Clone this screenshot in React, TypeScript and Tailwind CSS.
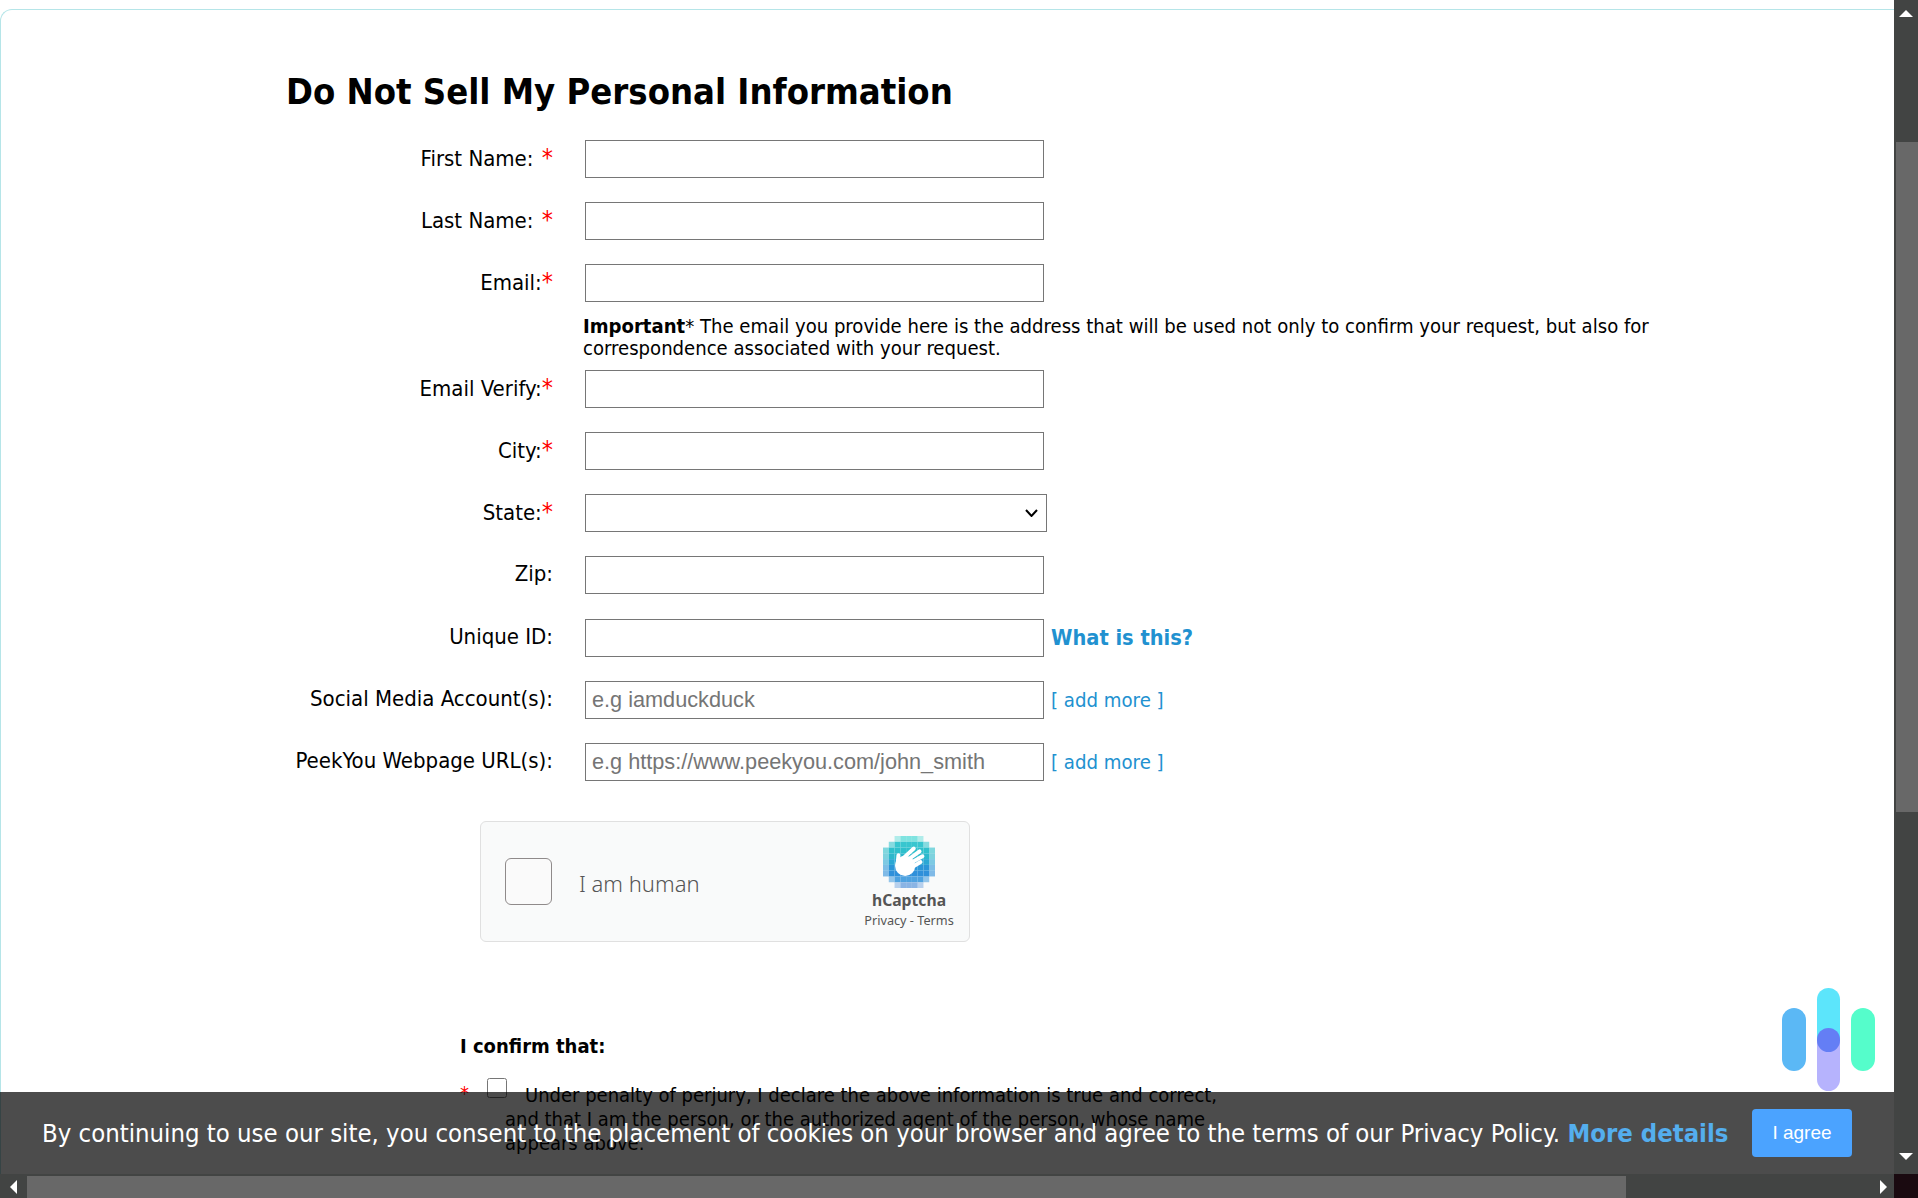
const font = "font-['DejaVu_Sans_Condensed','DejaVu_Sans',sans-serif]"

const fields = [
  { label: 'First Name:', required: true, spaced: true },
  { label: 'Last Name:', required: true, spaced: true },
  { label: 'Email:', required: true, note: true },
  { label: 'Email Verify:', required: true },
  { label: 'City:', required: true },
  { label: 'State:', required: true, select: true },
  { label: 'Zip:', tall: true },
  { label: 'Unique ID:', what: true },
  { label: 'Social Media Account(s):', placeholder: 'e.g iamduckduck', more: true },
  { label: 'PeekYou Webpage URL(s):', placeholder: 'e.g https://www.peekyou.com/john_smith', more: true },
]

const logoRows = [
  { from: 2, to: 6, color: '#7fe3e0' },
  { from: 1, to: 7, color: '#38c6cf' },
  { from: 0, to: 8, color: '#2fc0cc' },
  { from: 0, to: 8, color: '#2cb8cc' },
  { from: 0, to: 8, color: '#2aa8d4' },
  { from: 0, to: 8, color: '#2a96d8' },
  { from: 0, to: 8, color: '#2f90da' },
  { from: 1, to: 7, color: '#4ea2e0' },
  { from: 2, to: 6, color: '#8ab4e4' },
]

function CaptchaLogo() {
  return (
    <svg width="52" height="52" viewBox="0 0 54 54">
      {logoRows.map((row, y) =>
        Array.from({ length: row.to - row.from + 1 }, (_, i) => {
          const x = row.from + i
          const edge = x === row.from || x === row.to
          return (
            <rect
              key={`${x}-${y}`}
              x={x * 6}
              y={y * 6}
              width="6"
              height="6"
              fill={row.color}
              opacity={edge ? 0.6 : 1}
            />
          )
        }),
      )}
      <g stroke="#fff" strokeWidth="4" strokeLinecap="round" fill="none">
        <path d="M20 24 L32 13" />
        <path d="M24 26 L38 16" />
        <path d="M27 29 L41 21" />
        <path d="M29 33 L39 27" />
        <path d="M15 30 L16 20" />
      </g>
      <ellipse cx="23" cy="31" rx="10.5" ry="10.5" fill="#fff" />
    </svg>
  )
}

function FormRow({ field }: { field: (typeof fields)[number] }) {
  return (
    <>
      <div className="flex h-[38px] items-start">
        <label className="w-[552px] pt-[5px] text-right text-[22px] leading-[26px] whitespace-pre text-black">
          {field.label}
          {field.spaced && ' '}
          {field.required && (
            <span className={field.spaced ? 'ml-[2px] text-[25px] leading-none text-[#f00]' : 'text-[25px] leading-none text-[#f00]'}>*</span>
          )}
        </label>
        <div className="ml-[32px] flex items-center">
          {field.select ? (
            <div className="relative">
              <select className="block h-[38px] w-[462px] appearance-none rounded-none border border-[#767676] bg-white" />
              <svg
                className="pointer-events-none absolute top-[15px] right-[9px]"
                width="13"
                height="8"
                viewBox="0 0 13 8"
              >
                <path d="M1 1 L6.5 7 L12 1" fill="none" stroke="#000" strokeWidth="2" />
              </svg>
            </div>
          ) : (
            <input
              type="text"
              placeholder={field.placeholder}
              className="h-[38px] w-[459px] border border-[#767676] bg-white px-[6px] font-['Liberation_Sans',sans-serif] text-[21.7px] outline-none placeholder:text-[#757575]"
            />
          )}
          {field.what && (
            <a className="ml-[7px] text-[21.6px] font-bold text-[#2191d0]">What is this?</a>
          )}
          {field.more && (
            <a className="mt-[1px] ml-[7px] text-[20.2px] whitespace-pre text-[#2191d0]">[ add more ]</a>
          )}
        </div>
      </div>
      {field.note ? (
        <p className="mt-[13px] mb-[11px] ml-[582px] w-[1100px] text-[20.1px] leading-[22px] text-black">
          <b>Important</b>* The email you provide here is the address that will be used not only to confirm your request, but also for correspondence associated with your request.
        </p>
      ) : (
        <div className={field.tall ? 'h-[25px]' : 'h-[24px]'} />
      )}
    </>
  )
}

function Captcha() {
  return (
    <div className="mt-[16px] ml-[479px] flex h-[121px] w-[490px] items-center rounded-[6px] border border-[#e0e0e0] bg-[#f9fafa] pr-[16px] pl-[24px] font-['Noto_Sans',sans-serif]">
      <div className="h-[47px] w-[47px] rounded-[6px] border border-[#8f8a8a] bg-[#fafafa]" />
      <span className="mt-[4px] ml-[27px] flex-1 text-[22px] font-light text-[#555]">I am human</span>
      <div className="mt-[1px] flex w-[88px] flex-col items-center">
        <CaptchaLogo />
        <span className="text-[15.7px] leading-[24px] font-bold text-[#555]">hCaptcha</span>
        <span className="text-[12.7px] leading-[16px] whitespace-nowrap text-[#555]">Privacy - Terms</span>
      </div>
    </div>
  )
}

function Confirm() {
  return (
    <div className="mt-[93px] ml-[459px] w-[780px] text-[20px] text-black">
      <p className="leading-[22px] font-bold">I confirm that:</p>
      <div className="relative mt-[21px] pl-[45px] leading-[24px]">
        <span className="absolute top-[3px] left-0 text-[#f00]">*</span>
        <input type="checkbox" className="absolute top-0 left-[27px] h-[20px] w-[20px]" />
        <p className="pt-[5px] indent-[20px]">
          Under penalty of perjury, I declare the above information is true and correct, and that I am the person, or the authorized agent of the person, whose name appears above.
        </p>
      </div>
    </div>
  )
}

function SecurityMark() {
  return (
    <div className="absolute top-[988px] left-[1782px] flex h-[103px] gap-[11px]">
      <div className="mt-[20px] h-[63px] w-[24px] rounded-full bg-[#5bb8f5]" />
      <div className="relative h-[103px] w-[23px]">
        <div className="h-[52px] w-[23px] rounded-t-full bg-[#5ce5fb]" />
        <div className="h-[51px] w-[23px] rounded-b-full bg-[#b6b3fd]" />
        <div className="absolute top-[40px] left-0 h-[24px] w-[23px] rounded-full bg-[#647ef5]" />
      </div>
      <div className="mt-[20px] h-[63px] w-[24px] rounded-full bg-[#55fdcb]" />
    </div>
  )
}

function CookieBar() {
  return (
    <div className="absolute right-0 bottom-0 left-0 flex h-[82px] items-center bg-black/70 pr-[42px] pl-[42px]">
      <p className="flex-1 text-[25.48px] whitespace-nowrap text-white">
        By continuing to use our site, you consent to the placement of cookies on your browser and agree to the terms of our Privacy Policy.{' '}
        <a className="font-bold text-[#54aeee]">More details</a>
      </p>
      <button className="h-[48px] w-[100px] rounded-[4px] bg-[#4ba3ff] font-['Liberation_Sans',sans-serif] text-[19px] text-white">
        I agree
      </button>
    </div>
  )
}

export default function App() {
  return (
    <div className={`flex h-[1198px] w-[1918px] flex-col overflow-hidden bg-white ${font}`}>
      <div className="flex min-h-0 flex-1">
        <main className="relative min-w-0 flex-1 overflow-hidden pt-[9px]">
          <div className="h-full rounded-tl-[12px] border-t border-l border-[#b5e5e8] pt-[58px]">
            <h1 className="ml-[285px] h-[72px] text-[36.1px] leading-[48px] font-bold text-black">
              Do Not Sell My Personal Information
            </h1>
            {fields.map((field) => (
              <FormRow key={field.label} field={field} />
            ))}
            <Captcha />
            <Confirm />
          </div>
          <SecurityMark />
          <CookieBar />
        </main>
        <div className="flex w-[24px] flex-col bg-[#424443]">
          <div className="flex h-[142px] items-start justify-center pt-[10px]">
            <div className="h-0 w-0 border-x-[7px] border-b-[7px] border-x-transparent border-b-white" />
          </div>
          <div className="ml-[2px] h-[670px] bg-[#686868]" />
          <div className="mt-auto flex h-[24px] items-start justify-center pt-[3px]">
            <div className="h-0 w-0 border-x-[7px] border-t-[7px] border-x-transparent border-t-white" />
          </div>
        </div>
      </div>
      <div className="flex h-[24px] shrink-0 bg-[#424443]">
        <div className="flex w-[27px] items-center justify-center pt-[2px]">
          <div className="h-0 w-0 border-y-[7px] border-r-[7px] border-y-transparent border-r-white" />
        </div>
        <div className="mt-[2px] w-[1599px] bg-[#686868]" />
        <div className="flex flex-1 items-center justify-end pt-[2px] pr-[7px]">
          <div className="h-0 w-0 border-y-[7px] border-l-[7px] border-y-transparent border-l-white" />
        </div>
        <div className="w-[24px] bg-[#1a0a10]" />
      </div>
    </div>
  )
}
